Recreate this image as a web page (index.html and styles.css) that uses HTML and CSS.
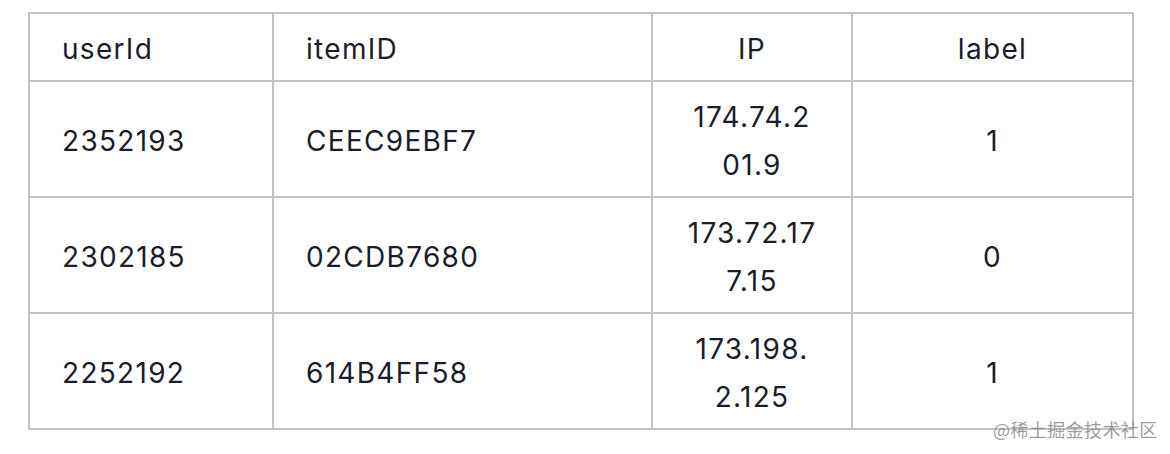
FILE: index.html
```html
<!DOCTYPE html>
<html>
<head>
<meta charset="utf-8">
<link rel="stylesheet" href="styles.css">
</head>
<body>
<div class="page">
  <table class="data">
    <colgroup>
      <col class="c1"><col class="c2"><col class="c3"><col class="c4">
    </colgroup>
    <thead>
      <tr><th>userId</th><th>itemID</th><th class="center">IP</th><th class="center">label</th></tr>
    </thead>
    <tbody>
      <tr><td>2352193</td><td>CEEC9EBF7</td><td class="center ip">174.74.201.9</td><td class="center">1</td></tr>
      <tr><td>2302185</td><td>02CDB7680</td><td class="center ip">173.72.177.15</td><td class="center">0</td></tr>
      <tr><td>2252192</td><td>614B4FF58</td><td class="center ip">173.198.2.125</td><td class="center">1</td></tr>
    </tbody>
  </table>
  <div class="watermark">@稀土掘金技术社区</div>
</div>
</body>
</html>
```
FILE: styles.css
```css
html, body {
  margin: 0;
  padding: 0;
  background: #ffffff;
}
.page {
  position: relative;
  width: 1170px;
  height: 454px;
  padding: 12px 0 0 28px;
  box-sizing: border-box;
}
.data {
  border-collapse: collapse;
  table-layout: fixed;
  width: 1104px;
  font-family: Inter, "Noto Sans", sans-serif;
  font-size: 28px;
  line-height: 48px;
  letter-spacing: 1.3px;
  color: #1a1d2b;
}
.c1 { width: 244px; }
.c2 { width: 379px; }
.c3 { width: 200px; }
.c4 { width: 281px; }
.data th, .data td {
  border: 2px solid #c3c3c3;
  padding: 11px 32px 7px;
  text-align: left;
  font-weight: 400;
  word-break: break-all;
  vertical-align: middle;
}
.data .center { text-align: center; }
.data .ip {
  padding-left: 34px;
  padding-right: 34px;
}
.watermark {
  position: absolute;
  left: 993px;
  top: 417px;
  font-family: "Noto Sans CJK SC", sans-serif;
  font-size: 18px;
  line-height: 24px;
  color: rgba(140, 140, 140, 0.85);
  letter-spacing: 0.4px;
}
```
